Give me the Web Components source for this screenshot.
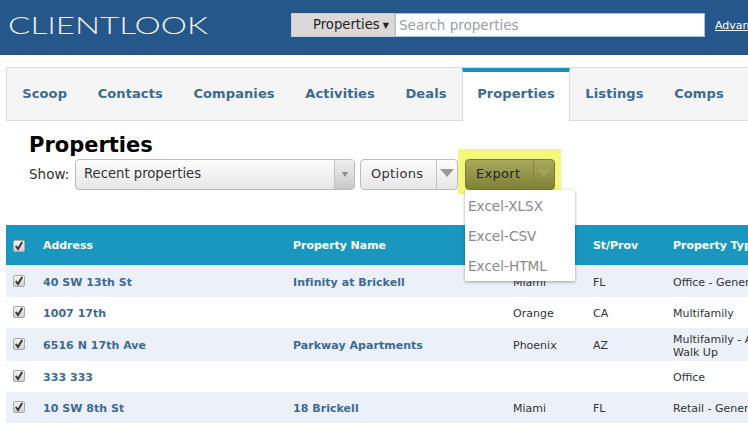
<!DOCTYPE html>
<html><head><meta charset="utf-8">
<style>
html,body{margin:0;padding:0;background:#fff;overflow:hidden;width:748px;height:430px}
body{font-family:"DejaVu Sans",Verdana,sans-serif;font-size:12px;color:#222}
</style></head><body>
<cl-header></cl-header>
<cl-tabs></cl-tabs>
<cl-toolbar></cl-toolbar>
<cl-table></cl-table>
<script>
const def=(name,html)=>customElements.define(name,class extends HTMLElement{
  connectedCallback(){const r=this.attachShadow({mode:'open'});r.innerHTML=typeof html==='function'?html(this):html;}
});
def('cl-header',`<style>
:host{display:flex;align-items:flex-start;height:55px;background:#26578a;box-sizing:border-box;overflow:hidden;white-space:nowrap}
:host>*{flex:none}
.logo{width:291px;padding:13px 0 0 8px;box-sizing:border-box;height:40px;font:300 23px/25px Lato,sans-serif;color:#eef3f8;}
.logo span{display:inline-block;transform:scaleX(1.44);transform-origin:0 0}
.sel{margin-top:13px;width:104px;height:24px;box-sizing:border-box;background:#dcd8d9;border:1px solid #c7c9cf;font-size:13.2px;line-height:22px;color:#222;padding-left:21px}
.sel i{font-style:normal;font-size:8px;margin-left:3px;vertical-align:1px}
.in{margin-top:13px;width:310px;height:24px;box-sizing:border-box;background:#fff;border:1px solid #a9c0d6;font-size:13.5px;line-height:22px;color:#98a0a8;padding-left:3px}
a{margin:19px 0 0 10px;font-size:11px;line-height:14px;color:#fff;text-decoration:underline}
</style>
<div class="logo"><span>CLIENTLOOK</span></div>
<div class="sel">Properties<i>▼</i></div><div class="in">Search properties</div><a>Advanced</a>`);

def('cl-tab',`<style>
:host{display:block;height:52px;box-sizing:border-box;padding:0 15.3px;font-weight:700;font-size:13px;letter-spacing:.1px;line-height:51px;color:#3c6a94}
:host([active]){background:#fff;border:1px solid #ddd;border-top:4px solid #1a8fbb;border-bottom:0;height:53px;margin-bottom:-1px;line-height:44px;padding:0 14.3px;}
</style><slot></slot>`);
def('cl-tabs',`<style>
:host{display:flex;margin:12px 0 0 6px;height:54px;box-sizing:border-box;background:#f5f5f5;border:1px solid #ddd;border-right:0;white-space:nowrap}
</style>
<cl-tab>Scoop</cl-tab><cl-tab>Contacts</cl-tab><cl-tab>Companies</cl-tab><cl-tab>Activities</cl-tab><cl-tab>Deals</cl-tab><cl-tab active>Properties</cl-tab><cl-tab>Listings</cl-tab><cl-tab>Comps</cl-tab>`);

def('cl-toolbar',`<style>
:host{display:block;position:relative;height:104px;padding:0 0 0 29px;box-sizing:border-box}
h1{margin:0;font-size:21px;line-height:26px;padding-top:11px;font-weight:700;color:#000;height:38px;box-sizing:border-box}
.row{display:flex;align-items:flex-start;white-space:nowrap}
.show{width:46px;font-size:13.5px;line-height:30px;color:#333}
.btn{display:flex;height:31px;box-sizing:border-box;border:1px solid #bbb;border-radius:4px;background:linear-gradient(#fdfdfd,#e6e6e6);font-size:13px;line-height:28px;color:#333}
.s{width:280px}
.s .t{flex:1;padding-left:8px;font-size:13.2px}
.s .a{width:19px;border-left:1px solid #c4c4c4;background:linear-gradient(#f0f0f0,#c8c8c8);border-radius:0 3px 3px 0;display:flex;align-items:center;justify-content:center}
.o{width:98px;margin-left:5px}
.o .t{flex:1;padding-left:10px;letter-spacing:.3px}
.o .a{width:21px;border-left:1px solid #c4c4c4;display:flex;justify-content:center;padding-top:9px;box-sizing:border-box}
.hl{background:#f5f77a;padding:10px 6px 4px 7px;margin-top:-10px;height:45px;box-sizing:border-box}
.e{width:90px;border-color:#7c7d35;background:linear-gradient(#a9aa5c,#7f8038);color:#222}
.e .t{flex:1;padding-left:10px;letter-spacing:.3px}
.e .a{width:21px;border-left:1px solid #84853f;display:flex;justify-content:center;padding-top:9px;box-sizing:border-box}
.tri{width:0;height:0;border:7px solid transparent;border-top:8px solid #999;border-bottom:0}
.e .tri{border-top-color:#a3a458;border-width:8px 7px 0}
.tris{width:0;height:0;border:3px solid transparent;border-top:5px solid #8b8b8b;border-bottom:0}
</style>
<h1>Properties</h1>
<div class="row"><div class="show">Show:</div>
<div class="btn s"><div class="t">Recent properties</div><div class="a"><div class="tris"></div></div></div>
<div class="btn o"><div class="t">Options</div><div class="a"><div class="tri"></div></div></div>
<div class="hl"><div class="btn e"><div class="t">Export</div><div class="a"><div class="tri"></div></div></div></div>
</div>
<cl-menu></cl-menu>`);

def('cl-menu',`<style>
:host{display:block;position:absolute;left:465px;top:69px;width:110px;height:91px;box-sizing:border-box;background:#fff;z-index:5;box-shadow:0 1px 3px rgba(0,0,0,.35);padding:1px 0 0 3px;font-size:13.6px;line-height:30px;color:#8a8a8a}
div{height:30px}
</style><div>Excel-XLSX</div><div>Excel-CSV</div><div>Excel-HTML</div>`);

def('cl-check',`<style>
:host{display:block;width:12px;height:12px;box-sizing:border-box;background:linear-gradient(#f4f4f4,#cfcfcf);border:1px solid #aaa;border-radius:2px}
svg{display:block}
</style><svg width="10" height="10" viewBox="0 0 10 10"><path d="M1.8 5L4 8L8.2 1" fill="none" stroke="#333" stroke-width="1.9"/></svg>`);

const grid='display:grid;grid-template-columns:37px 250px 220px 80px 80px 160px;';
def('cl-head',`<style>
:host{${grid}height:40px;background:#1a97c0;color:#fff;font-weight:700;font-size:11px;letter-spacing:-.05px;line-height:42px;white-space:nowrap}
cl-check{margin:15px 0 0 7px}
</style><cl-check></cl-check><div>Address</div><div>Property Name</div><div></div><div>St/Prov</div><div>Property Type</div>`);
def('cl-row',h=>{const a=n=>h.getAttribute(n)||'';return `<style>
:host{${grid}align-items:center;font-size:11px;line-height:13px;color:#333;height:${a('h')||31}px;box-sizing:border-box;padding-top:2px}
:host([alt]){background:#ecf0f8}
cl-check{margin:-3px 0 0 7px}
.l{font-weight:700;color:#3c6a94;letter-spacing:.04px}
</style><cl-check></cl-check><div class="l">${a('addr')}</div><div class="l">${a('name')}</div><div>${a('city')}</div><div>${a('st')}</div><div>${a('type')}</div>`});
def('cl-table',`<style>
:host{display:block;margin-left:6px;width:830px}
</style>
<cl-head></cl-head>
<cl-row alt h="32" addr="40 SW 13th St" name="Infinity at Brickell" city="Miami" st="FL" type="Office - General"></cl-row>
<cl-row h="31" addr="1007 17th" city="Orange" st="CA" type="Multifamily"></cl-row>
<cl-row alt h="33" addr="6516 N 17th Ave" name="Parkway Apartments" city="Phoenix" st="AZ" type="Multifamily - Apartment Walk Up"></cl-row>
<cl-row h="31" addr="333 333" type="Office"></cl-row>
<cl-row alt h="31" addr="10 SW 8th St" name="18 Brickell" city="Miami" st="FL" type="Retail - General"></cl-row>`);
</script>
</body></html>
